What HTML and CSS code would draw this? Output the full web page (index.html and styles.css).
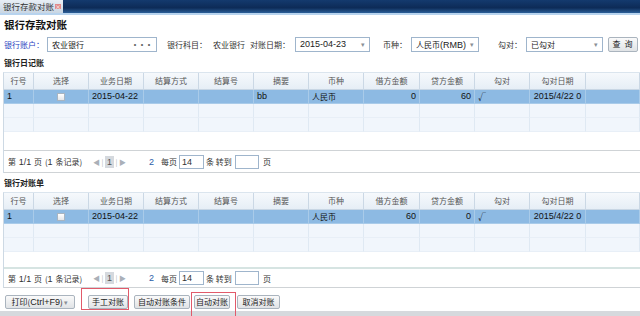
FILE: index.html
```html
<!DOCTYPE html>
<html lang="zh-CN">
<head>
  <meta charset="UTF-8" />
  <title>银行存款对账</title>
  <link rel="stylesheet" href="styles.css">
</head>
<body>
  <div class="tabbar">
    <div class="tab">银行存款对账<span class="tab-close">×</span></div>
  </div>

  <div class="page">
    <h1 class="title">银行存款对账</h1>

    <div class="filters">
      <span class="lbl lbl-blue w-43">银行账户：</span>
      <div class="field f-account"><span>农业银行</span><span class="dots">···</span></div>
      <span class="lbl w-46 ml-10">银行科目：</span>
      <span class="lbl w-37">农业银行</span>
      <span class="lbl w-45">对账日期：</span>
      <div class="field f-date"><span class="num">2015-04-23</span><span class="caret">▾</span></div>
      <span class="lbl w-28 ml-13">币种：</span>
      <div class="field f-cur"><span>人民币<span class="num">(RMB)</span></span><span class="caret">▾</span></div>
      <span class="lbl w-28 ml-19">勾对：</span>
      <div class="field f-check"><span>已勾对</span><span class="caret">▾</span></div>
      <button class="btn btn-query">查 询</button>
    </div>

    <div class="section-title">银行日记账</div>
    <div class="grid">
      <div class="row head">
        <div>行号</div><div>选择</div><div>业务日期</div><div>结算方式</div><div>结算号</div><div>摘要</div><div>币种</div><div>借方金额</div><div>贷方金额</div><div>勾对</div><div>勾对日期</div><div></div>
      </div>
      <div class="row sel">
        <div class="l num">1</div><div><span class="cb"></span></div><div class="l num">2015-04-22</div><div></div><div></div><div class="l num">bb</div><div class="l">人民币</div><div class="r num">0</div><div class="r num">60</div><div class="l">√</div><div class="num">2015/4/22 0</div><div></div>
      </div>
      <div class="row"><div></div><div></div><div></div><div></div><div></div><div></div><div></div><div></div><div></div><div></div><div></div><div></div></div>
      <div class="row"><div></div><div></div><div></div><div></div><div></div><div></div><div></div><div></div><div></div><div></div><div></div><div></div></div>
      <div class="blank blank-1"></div>
      <div class="pager">
        <span class="pg-info">第 <span class="num">1/1</span> 页 (<span class="num">1</span> 条记录)</span>
        <span class="nav">◀ | <b class="cur">1</b> | ▶</span>
        <span class="pg-link num">2</span>
        <span class="pg-w18">每页</span><span class="pg-input num">14</span><span class="pg-go">条 转到</span><span class="pg-input pg-input-2"></span><span class="pg-last">页</span>
      </div>
    </div>

    <div class="section-title st-2">银行对账单</div>
    <div class="grid">
      <div class="row head">
        <div>行号</div><div>选择</div><div>业务日期</div><div>结算方式</div><div>结算号</div><div>摘要</div><div>币种</div><div>借方金额</div><div>贷方金额</div><div>勾对</div><div>勾对日期</div><div></div>
      </div>
      <div class="row sel">
        <div class="l num">1</div><div><span class="cb"></span></div><div class="l num">2015-04-22</div><div></div><div></div><div></div><div class="l">人民币</div><div class="r num">60</div><div class="r num">0</div><div class="l">√</div><div class="num">2015/4/22 0</div><div></div>
      </div>
      <div class="row"><div></div><div></div><div></div><div></div><div></div><div></div><div></div><div></div><div></div><div></div><div></div><div></div></div>
      <div class="row"><div></div><div></div><div></div><div></div><div></div><div></div><div></div><div></div><div></div><div></div><div></div><div></div></div>
      <div class="blank blank-2"></div>
      <div class="pager pager-2">
        <span class="pg-info">第 <span class="num">1/1</span> 页 (<span class="num">1</span> 条记录)</span>
        <span class="nav">◀ | <b class="cur">1</b> | ▶</span>
        <span class="pg-link num">2</span>
        <span class="pg-w18">每页</span><span class="pg-input num">14</span><span class="pg-go">条 转到</span><span class="pg-input pg-input-2"></span><span class="pg-last">页</span>
      </div>
    </div>

    <div class="toolbar">
      <button class="btn btn-print">打印(<span class="num">Ctrl+F9</span>) <span class="caret">▾</span></button>
      <span class="mark mark-1"><button class="btn b-40">手工对账</button></span>
      <button class="btn b-56">自动对账条件</button>
      <span class="mark mark-2"><button class="btn b-36">自动对账</button></span>
      <button class="btn b-43">取消对账</button>
    </div>
  </div>
  <div class="footer-strip"></div>
</body>
</html>
```

FILE: styles.css
```css
body {
  margin: 0;
  font-family: "Noto Sans CJK SC", "Liberation Sans", sans-serif;
  font-size: 8px;
  color: #222;
  background: #fff;
  width: 640px;
  height: 316px;
  overflow: hidden;
  position: relative;
}

.num {
  font-family: "Liberation Sans", sans-serif;
  font-size: 9px;
}

/* top tab strip */
.tabbar {
  height: 13px;
  background: linear-gradient(#143a6e, #0d2b57 60%, #2b5e98);
  border-bottom: 2px solid #b7d3ee;
  display: flex;
}

.tab {
  width: 60px;
  background: linear-gradient(#e8eef5, #c9d6e3);
  color: #333;
  font-size: 8.5px;
  line-height: 13px;
  padding-left: 3px;
  white-space: nowrap;
  display: flex;
  align-items: center;
}

.tab-close {
  display: inline-block;
  width: 6px;
  height: 5px;
  line-height: 5px;
  font-size: 6px;
  color: #fff;
  background: #e08a8a;
  text-align: center;
  margin-left: 1px;
}

.page {
  padding: 0 0 0 3px;
}

.title {
  margin: 0;
  padding-left: 1px;
  height: 18px;
  font-size: 10.5px;
  line-height: 19px;
  font-weight: bold;
  color: #111;
}

/* filter row */
.filters {
  display: flex;
  align-items: center;
  height: 16px;
  margin-top: 3px;
  padding-left: 1px;
}

.lbl {
  flex: none;
  white-space: nowrap;
  color: #333;
}

.lbl-blue { color: #2a3fbf; }

.w-43 { width: 43px; }
.w-46 { width: 46px; }
.w-37 { width: 37px; }
.w-45 { width: 45px; }
.w-28 { width: 28px; }
.ml-10 { margin-left: 10px; }
.ml-13 { margin-left: 13px; }
.ml-19 { margin-left: 19px; }

.field {
  flex: none;
  box-sizing: border-box;
  height: 15px;
  border: 1px solid #9fb5cc;
  display: flex;
  align-items: center;
  justify-content: space-between;
  padding: 0 4px 0 4px;
  white-space: nowrap;
  background: #fff;
}

.f-account { width: 110px; }
.f-date { width: 75px; }
.f-cur { width: 68px; }
.f-check { width: 77px; }

.dots { color: #666; letter-spacing: -1px; font-weight: bold; }
.caret { color: #8a8f96; font-size: 7px; }

.btn {
  flex: none;
  box-sizing: border-box;
  font-family: inherit;
  font-size: 8px;
  height: 14px;
  line-height: 12px;
  padding: 0;
  border: 1px solid #aab4be;
  border-radius: 2px;
  background: linear-gradient(#fafafa, #e0e3e6);
  color: #222;
  white-space: nowrap;
  text-align: center;
}

.btn-query {
  width: 30px;
  height: 15px;
  margin-left: 5px;
  letter-spacing: 1px;
}

.section-title {
  font-weight: bold;
  height: 12px;
  line-height: 12px;
  margin-top: 5px;
  padding-left: 1px;
  color: #222;
}

.st-2 { margin-top: 4px; }

/* data grid */
.grid {
  margin-top: 3px;
  border-top: 1px solid #dbe5ee;
  border-left: 1px solid #cdd9e4;
}

.row {
  display: grid;
  grid-template-columns: 30px 55px 55px 55px 55px 55px 55px 56px 55px 55px 56px 1fr;
  height: 14px;
}

.row > div {
  box-sizing: border-box;
  border-right: 1px solid #dfe9f3;
  border-bottom: 1px solid #e8eff7;
  background: #f1f6fc;
  line-height: 13px;
  text-align: center;
  white-space: nowrap;
  overflow: hidden;
  padding: 0 3px;
}

.row.head { height: 17px; }

.row.head > div {
  background: linear-gradient(#f6f9fc, #e6eef6);
  border-right-color: #cbd8e5;
  border-bottom-color: #c8d6e4;
  color: #555;
  line-height: 16px;
}

.row.sel > div {
  background: #8dbae3;
  border-right-color: #a9cbe9;
  border-bottom-color: #a9cbe9;
  color: #111;
}

.row > .l { text-align: left; }
.row > .r { text-align: right; }

.cb {
  display: inline-block;
  box-sizing: border-box;
  width: 8px;
  height: 8px;
  border: 1px solid #a8b4c0;
  background: linear-gradient(#fff, #e2e6ea);
  vertical-align: -1px;
}

.blank { background: #fff; box-sizing: border-box; }
.blank-1 { height: 19px; border-bottom: 1px solid #cfd3d6; }
.blank-2 { height: 17px; border-bottom: 2px solid #d6e4e2; }

/* pager */
.pager {
  box-sizing: border-box;
  height: 22px;
  display: flex;
  align-items: center;
  padding-left: 4px;
  color: #333;
  white-space: nowrap;
  background: #fff;
  border-bottom: 1px solid #cfd3d6;
}

.pager-2 { height: 19px; }

.pager > span { flex: none; }

.pg-info { width: 85px; word-spacing: 1px; }

.nav {
  width: 38px;
  color: #aab0b8;
  font-size: 7px;
}

.cur {
  display: inline-block;
  background: #d5d9de;
  color: #555;
  font-weight: normal;
  padding: 1px 2px;
  font-family: "Liberation Sans", sans-serif;
  font-size: 9px;
}

.pg-link {
  width: 12px;
  margin-left: 18px;
  color: #2a5da8;
}

.pg-w18 { width: 18px; }

.pg-input {
  box-sizing: border-box;
  width: 25px;
  height: 14px;
  line-height: 12px;
  border: 1px solid #9fb5cc;
  padding-left: 2px;
}

.pg-input-2 { width: 24px; }
.pg-go { width: 29px; margin-left: 2px; }
.pg-last { margin-left: 4px; }

/* bottom toolbar */
.toolbar {
  display: flex;
  align-items: flex-start;
  padding-left: 2px;
}

.toolbar > .btn { margin-top: 7px; }

.btn-print { width: 70px; }
.b-40 { width: 40px; }
.b-56 { width: 56px; margin-left: 5px; }
.b-36 { width: 36px; }
.b-43 { width: 43px; margin-left: 1px; }

.mark {
  flex: none;
  display: flex;
  box-sizing: border-box;
  border: 1px solid #e15a6a;
}

.mark-1 {
  width: 48px;
  height: 22px;
  margin-left: 6px;
  padding: 6px 0 0 6px;
}

.mark-2 {
  width: 45px;
  height: 30px;
  margin-top: 4px;
  margin-left: 1px;
  padding: 2px 0 0 2px;
  position: relative;
  z-index: 1;
}

.footer-strip {
  position: absolute;
  left: 0;
  right: 0;
  bottom: 0;
  height: 5px;
  background: #d6d9dd;
}
```
